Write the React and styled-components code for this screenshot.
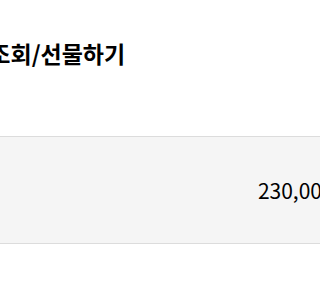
import React from 'react';
import styled, { createGlobalStyle } from 'styled-components';

const GlobalStyle = createGlobalStyle`
  html, body {
    margin: 0;
    padding: 0;
    background: #fff;
  }
  body {
    font-family: 'Noto Sans CJK KR', 'Noto Sans', sans-serif;
    color: #000;
  }
`;

const Frame = styled.div`
  width: 100vw;
  height: 100vh;
  overflow: hidden;
`;

const Page = styled.div`
  width: 440px;
  margin-left: -60px;
  padding-top: 37px;
`;

const Title = styled.h2`
  margin: 0 0 0 7px;
  font-size: 23px;
  font-weight: 700;
  line-height: 32px;
`;

const PriceBox = styled.div`
  margin-top: 67px;
  height: 106px;
  display: flex;
  align-items: center;
  justify-content: flex-end;
  padding: 0 27px;
  background: #f5f5f5;
  border-top: 1px solid #dcdcdc;
  border-bottom: 1px solid #dcdcdc;
`;

const Price = styled.span`
  font-size: 21px;
  line-height: 30px;
`;

export default function App() {
  return (
    <>
      <GlobalStyle />
      <Frame>
        <Page>
          <Title>잔액조회/선물하기</Title>
          <PriceBox>
            <Price>230,000원</Price>
          </PriceBox>
        </Page>
      </Frame>
    </>
  );
}
